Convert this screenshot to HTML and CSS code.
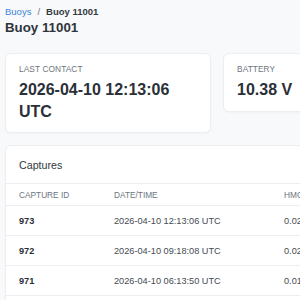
FILE: index.html
```html
<!DOCTYPE html>
<html>
<head>
<meta charset="utf-8">
<link rel="stylesheet" href="styles.css">
</head>
<body>
<div class="page">
  <nav class="crumbs"><a class="crumb-link">Buoys</a><span class="crumb-sep">/</span><span class="crumb-current">Buoy 11001</span></nav>
  <h1 class="title">Buoy 11001</h1>
  <div class="stats">
    <div class="card stat">
      <div class="stat-label">Last contact</div>
      <div class="stat-value">2026-04-10 12:13:06 UTC</div>
    </div>
    <div class="card stat">
      <div class="stat-label">Battery</div>
      <div class="stat-value">10.38 V</div>
    </div>
    <div class="card stat">
      <div class="stat-label">Captures</div>
      <div class="stat-value">973</div>
    </div>
  </div>
  <div class="card captures">
    <div class="captures-head">Captures</div>
    <table class="table">
      <colgroup><col class="c1"><col class="c2"><col class="c3"><col class="c4"></colgroup>
      <thead>
        <tr><th>Capture ID</th><th>Date/Time</th><th>HMC</th><th>Size</th></tr>
      </thead>
      <tbody>
        <tr><td class="id">973</td><td>2026-04-10 12:13:06 UTC</td><td>0.02</td><td>12</td></tr>
        <tr><td class="id">972</td><td>2026-04-10 09:18:08 UTC</td><td>0.02</td><td>12</td></tr>
        <tr><td class="id">971</td><td>2026-04-10 06:13:50 UTC</td><td>0.01</td><td>12</td></tr>
        <tr><td class="id">970</td><td>2026-04-10 03:12:44 UTC</td><td>0.01</td><td>12</td></tr>
      </tbody>
    </table>
  </div>
</div>
</body>
</html>
```
FILE: styles.css
```css
html, body {
  margin: 0;
  padding: 0;
  overflow: hidden;
  background: #f8f9fb;
}
body {
  font-family: "Liberation Sans", Arial, sans-serif;
  color: #2b2f36;
}
.page {
  padding: 5px 5px;
  width: 640px;
}
.crumbs {
  font-size: 9.5px;
  line-height: 13px;
  display: flex;
  align-items: center;
}
.crumb-link {
  color: #3b86d8;
}
.crumb-sep {
  color: #6c757d;
  margin: 0 6px;
}
.crumb-current {
  font-weight: bold;
  color: #343a40;
}
.title {
  margin: 1px 0 0;
  font-size: 13.3px;
  line-height: 17px;
  font-weight: bold;
  color: #2f343b;
}
.stats {
  margin-top: 17px;
  display: grid;
  grid-template-columns: 206px 206px 206px;
  gap: 12px;
  align-items: start;
}
.card {
  background: #fff;
  border: 1px solid #eceef1;
  border-radius: 6px;
  box-shadow: 0 1px 2px rgba(0,0,0,0.03);
}
.stat {
  padding: 10px 13px;
}
.stat-label {
  font-size: 8.3px;
  line-height: 11px;
  text-transform: uppercase;
  letter-spacing: 0.1px;
  color: #6c757d;
}
.stat-value {
  margin-top: 4px;
  font-size: 16px;
  line-height: 21.7px;
  font-weight: bold;
  color: #2b3038;
}
.captures {
  margin-top: 12px;
  width: 520px;
  overflow: hidden;
}
.captures-head {
  height: 37px;
  padding: 0 13px;
  display: flex;
  align-items: center;
  font-size: 10.7px;
  color: #343a40;
  border-bottom: 1px solid #eceef1;
}
.table {
  border-collapse: collapse;
  table-layout: fixed;
  width: 100%;
}
.c1 { width: 95px; }
.c2 { width: 170px; }
.c3 { width: 90px; }
.table th {
  text-align: left;
  font-weight: normal;
  font-size: 8.3px;
  text-transform: uppercase;
  color: #6c757d;
  height: 21px;
  padding: 0 13px;
  border-bottom: 1px solid #eceef1;
}
.table td {
  height: 29px;
  padding: 0 13px;
  font-size: 9.2px;
  color: #454b53;
  border-bottom: 1px solid #eceef1;
}
.table td.id {
  font-weight: bold;
  color: #2b3038;
}
```
